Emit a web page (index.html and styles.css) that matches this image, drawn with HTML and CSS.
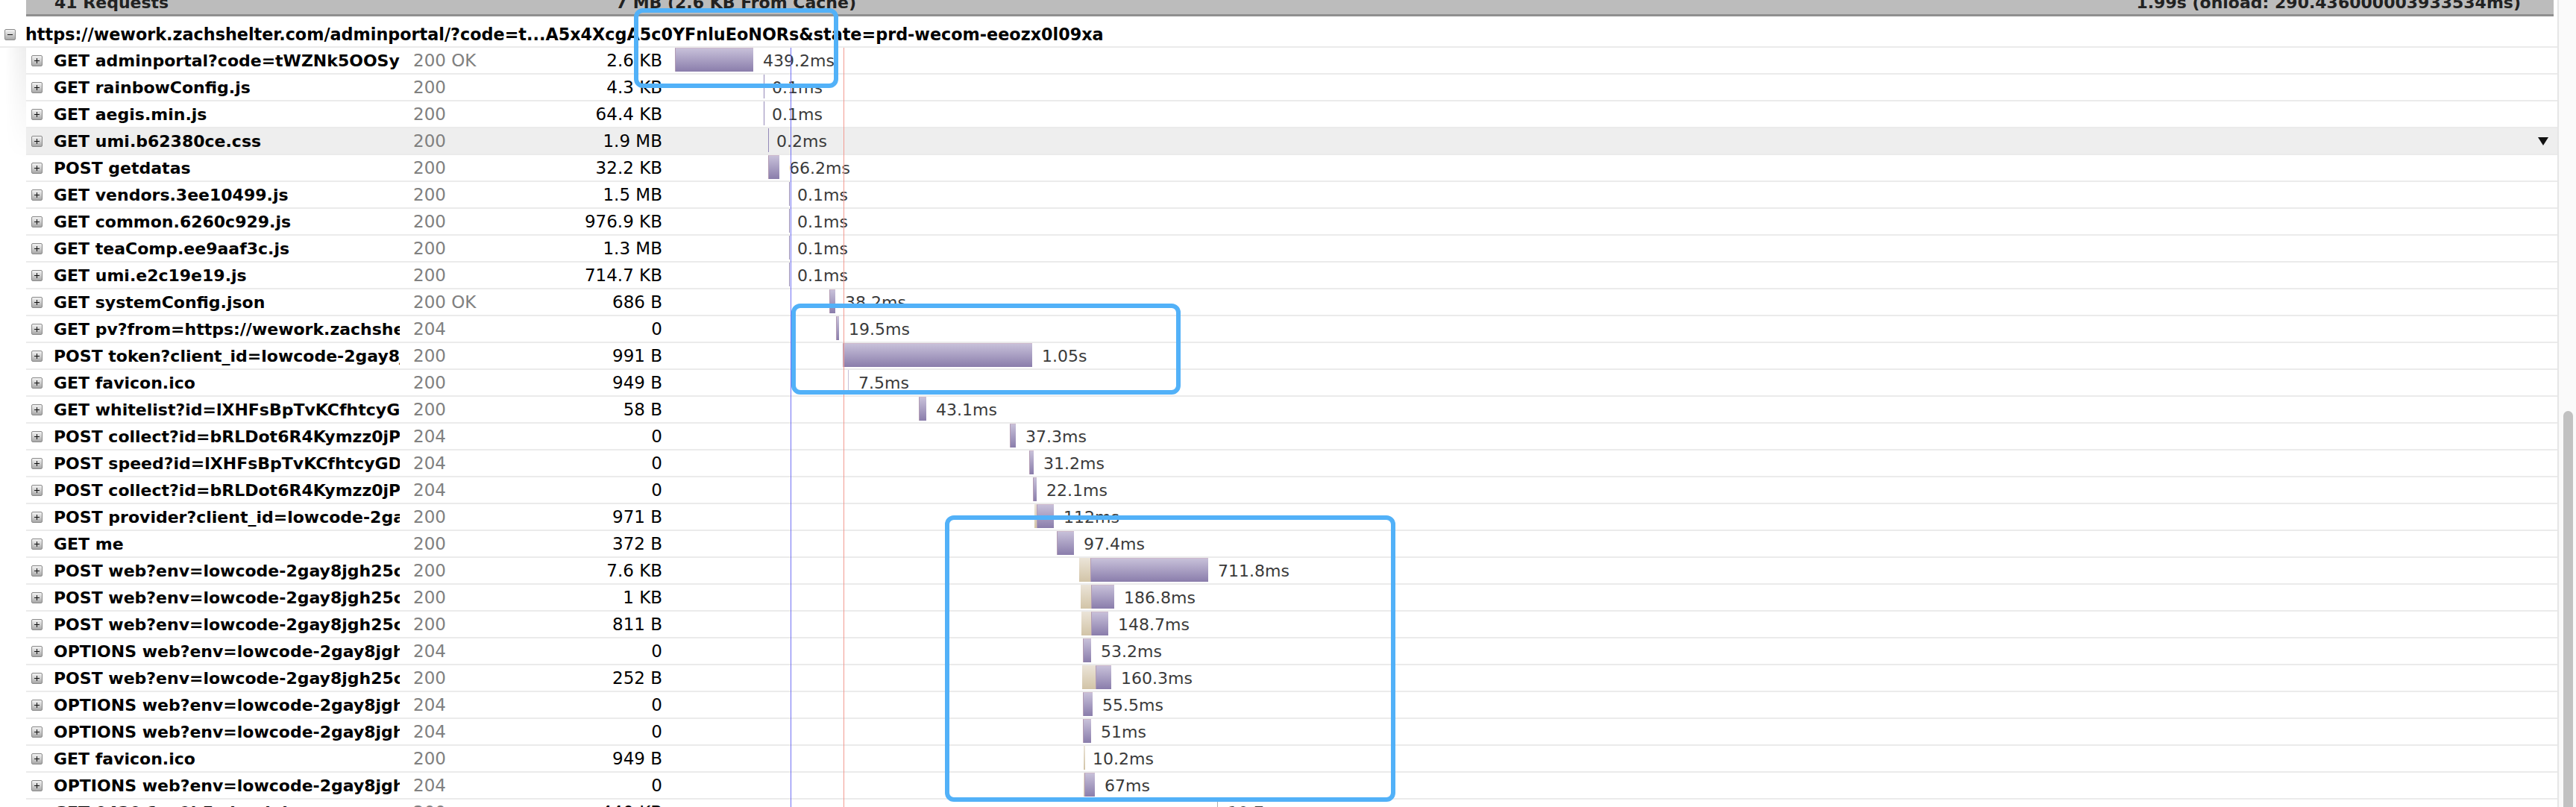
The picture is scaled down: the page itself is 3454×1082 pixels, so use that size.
FILE: index.html
```html
<!DOCTYPE html>
<html>
<head>
<meta charset="utf-8">
<title>Net</title>
<link rel="stylesheet" href="styles.css">
</head>
<body>
<div class="page">
  <div class="content">
    <div class="summary">
      <span class="sum-count">41 Requests</span>
      <span class="sum-size">7 MB (2.6 KB From Cache)</span>
      <span class="sum-time">1.99s (onload: 290.436000003933534ms)</span>
    </div>
    <div class="title">
      <span class="tw minus"></span>
      <span class="title-text">https://wework.zachshelter.com/adminportal/?code=t...A5x4XcgA5c0YFnluEoNORs&amp;state=prd-wecom-eeozx0l09xa</span>
    </div>
    <div class="rows">
      <div class="row"><span class="icon-cell"><span class="tw"></span></span><span class="name">GET adminportal?code=tWZNk5OOSylA5x4XcgA5c0YFnluEoNORs</span><span class="status">200 OK</span><span class="size">2.6 KB</span><span class="timeline"><span class="bar" style="margin-left:0px"><span class="recv" style="width:105px"></span></span><span class="label">439.2ms</span></span></div>
      <div class="row"><span class="icon-cell"><span class="tw"></span></span><span class="name">GET rainbowConfig.js</span><span class="status">200</span><span class="size">4.3 KB</span><span class="timeline"><span class="bar" style="margin-left:119px"><span class="thin" style="width:1px"></span></span><span class="label near">0.1ms</span></span></div>
      <div class="row"><span class="icon-cell"><span class="tw"></span></span><span class="name">GET aegis.min.js</span><span class="status">200</span><span class="size">64.4 KB</span><span class="timeline"><span class="bar" style="margin-left:119px"><span class="thin" style="width:1px"></span></span><span class="label near">0.1ms</span></span></div>
      <div class="row hover"><span class="icon-cell"><span class="tw"></span></span><span class="name">GET umi.b62380ce.css</span><span class="status">200</span><span class="size">1.9 MB</span><span class="timeline"><span class="bar" style="margin-left:125px"><span class="thin" style="width:1px"></span></span><span class="label near">0.2ms</span><span class="arrow"></span></span></div>
      <div class="row"><span class="icon-cell"><span class="tw"></span></span><span class="name">POST getdatas</span><span class="status">200</span><span class="size">32.2 KB</span><span class="timeline"><span class="bar" style="margin-left:125px"><span class="recv" style="width:15px"></span></span><span class="label">66.2ms</span></span></div>
      <div class="row"><span class="icon-cell"><span class="tw"></span></span><span class="name">GET vendors.3ee10499.js</span><span class="status">200</span><span class="size">1.5 MB</span><span class="timeline"><span class="bar" style="margin-left:153px"><span class="thin" style="width:1px"></span></span><span class="label near">0.1ms</span></span></div>
      <div class="row"><span class="icon-cell"><span class="tw"></span></span><span class="name">GET common.6260c929.js</span><span class="status">200</span><span class="size">976.9 KB</span><span class="timeline"><span class="bar" style="margin-left:153px"><span class="thin" style="width:1px"></span></span><span class="label near">0.1ms</span></span></div>
      <div class="row"><span class="icon-cell"><span class="tw"></span></span><span class="name">GET teaComp.ee9aaf3c.js</span><span class="status">200</span><span class="size">1.3 MB</span><span class="timeline"><span class="bar" style="margin-left:153px"><span class="thin" style="width:1px"></span></span><span class="label near">0.1ms</span></span></div>
      <div class="row"><span class="icon-cell"><span class="tw"></span></span><span class="name">GET umi.e2c19e19.js</span><span class="status">200</span><span class="size">714.7 KB</span><span class="timeline"><span class="bar" style="margin-left:153px"><span class="thin" style="width:1px"></span></span><span class="label near">0.1ms</span></span></div>
      <div class="row"><span class="icon-cell"><span class="tw"></span></span><span class="name">GET systemConfig.json</span><span class="status">200 OK</span><span class="size">686 B</span><span class="timeline"><span class="bar" style="margin-left:207px"><span class="recv" style="width:8px"></span></span><span class="label">38.2ms</span></span></div>
      <div class="row"><span class="icon-cell"><span class="tw"></span></span><span class="name">GET pv?from=https://wework.zachshelter.com</span><span class="status">204</span><span class="size">0</span><span class="timeline"><span class="bar" style="margin-left:216px"><span class="recv" style="width:4px"></span></span><span class="label">19.5ms</span></span></div>
      <div class="row"><span class="icon-cell"><span class="tw"></span></span><span class="name">POST token?client_id=lowcode-2gay8jgh25</span><span class="status">200</span><span class="size">991 B</span><span class="timeline"><span class="bar" style="margin-left:225px"><span class="recv" style="width:254px"></span></span><span class="label">1.05s</span></span></div>
      <div class="row"><span class="icon-cell"><span class="tw"></span></span><span class="name">GET favicon.ico</span><span class="status">200</span><span class="size">949 B</span><span class="timeline"><span class="bar" style="margin-left:232px"><span class="thin light" style="width:1px"></span></span><span class="label">7.5ms</span></span></div>
      <div class="row"><span class="icon-cell"><span class="tw"></span></span><span class="name">GET whitelist?id=lXHFsBpTvKCfhtcyGDx</span><span class="status">200</span><span class="size">58 B</span><span class="timeline"><span class="bar" style="margin-left:327px"><span class="recv" style="width:10px"></span></span><span class="label">43.1ms</span></span></div>
      <div class="row"><span class="icon-cell"><span class="tw"></span></span><span class="name">POST collect?id=bRLDot6R4Kymzz0jPx</span><span class="status">204</span><span class="size">0</span><span class="timeline"><span class="bar" style="margin-left:449px"><span class="recv" style="width:8px"></span></span><span class="label">37.3ms</span></span></div>
      <div class="row"><span class="icon-cell"><span class="tw"></span></span><span class="name">POST speed?id=lXHFsBpTvKCfhtcyGDx</span><span class="status">204</span><span class="size">0</span><span class="timeline"><span class="bar" style="margin-left:475px"><span class="recv" style="width:6px"></span></span><span class="label">31.2ms</span></span></div>
      <div class="row"><span class="icon-cell"><span class="tw"></span></span><span class="name">POST collect?id=bRLDot6R4Kymzz0jPx</span><span class="status">204</span><span class="size">0</span><span class="timeline"><span class="bar" style="margin-left:480px"><span class="recv" style="width:5px"></span></span><span class="label">22.1ms</span></span></div>
      <div class="row"><span class="icon-cell"><span class="tw"></span></span><span class="name">POST provider?client_id=lowcode-2gay8jgh25</span><span class="status">200</span><span class="size">971 B</span><span class="timeline"><span class="bar" style="margin-left:482px"><span class="wait" style="width:3px"></span><span class="recv" style="width:23px"></span></span><span class="label">112ms</span></span></div>
      <div class="row"><span class="icon-cell"><span class="tw"></span></span><span class="name">GET me</span><span class="status">200</span><span class="size">372 B</span><span class="timeline"><span class="bar" style="margin-left:512px"><span class="recv" style="width:23px"></span></span><span class="label">97.4ms</span></span></div>
      <div class="row"><span class="icon-cell"><span class="tw"></span></span><span class="name">POST web?env=lowcode-2gay8jgh25c</span><span class="status">200</span><span class="size">7.6 KB</span><span class="timeline"><span class="bar" style="margin-left:542px"><span class="wait" style="width:15px"></span><span class="recv" style="width:158px"></span></span><span class="label">711.8ms</span></span></div>
      <div class="row"><span class="icon-cell"><span class="tw"></span></span><span class="name">POST web?env=lowcode-2gay8jgh25c</span><span class="status">200</span><span class="size">1 KB</span><span class="timeline"><span class="bar" style="margin-left:544px"><span class="wait" style="width:14px"></span><span class="recv" style="width:31px"></span></span><span class="label">186.8ms</span></span></div>
      <div class="row"><span class="icon-cell"><span class="tw"></span></span><span class="name">POST web?env=lowcode-2gay8jgh25c</span><span class="status">200</span><span class="size">811 B</span><span class="timeline"><span class="bar" style="margin-left:545px"><span class="wait" style="width:13px"></span><span class="recv" style="width:23px"></span></span><span class="label">148.7ms</span></span></div>
      <div class="row"><span class="icon-cell"><span class="tw"></span></span><span class="name">OPTIONS web?env=lowcode-2gay8jgh25c</span><span class="status">204</span><span class="size">0</span><span class="timeline"><span class="bar" style="margin-left:547px"><span class="recv" style="width:11px"></span></span><span class="label">53.2ms</span></span></div>
      <div class="row"><span class="icon-cell"><span class="tw"></span></span><span class="name">POST web?env=lowcode-2gay8jgh25c</span><span class="status">200</span><span class="size">252 B</span><span class="timeline"><span class="bar" style="margin-left:546px"><span class="wait" style="width:18px"></span><span class="recv" style="width:21px"></span></span><span class="label">160.3ms</span></span></div>
      <div class="row"><span class="icon-cell"><span class="tw"></span></span><span class="name">OPTIONS web?env=lowcode-2gay8jgh25c</span><span class="status">204</span><span class="size">0</span><span class="timeline"><span class="bar" style="margin-left:547px"><span class="recv" style="width:13px"></span></span><span class="label">55.5ms</span></span></div>
      <div class="row"><span class="icon-cell"><span class="tw"></span></span><span class="name">OPTIONS web?env=lowcode-2gay8jgh25c</span><span class="status">204</span><span class="size">0</span><span class="timeline"><span class="bar" style="margin-left:547px"><span class="recv" style="width:11px"></span></span><span class="label">51ms</span></span></div>
      <div class="row"><span class="icon-cell"><span class="tw"></span></span><span class="name">GET favicon.ico</span><span class="status">200</span><span class="size">949 B</span><span class="timeline"><span class="bar" style="margin-left:548px"><span class="wait" style="width:2px"></span></span><span class="label near">10.2ms</span></span></div>
      <div class="row"><span class="icon-cell"><span class="tw"></span></span><span class="name">OPTIONS web?env=lowcode-2gay8jgh25c</span><span class="status">204</span><span class="size">0</span><span class="timeline"><span class="bar" style="margin-left:548px"><span class="wait" style="width:1px"></span><span class="recv" style="width:14px"></span></span><span class="label">67ms</span></span></div>
      <div class="row"><span class="icon-cell"><span class="tw"></span></span><span class="name">GET 0430.1ac9b5.chunk.js</span><span class="status">200</span><span class="size">440 KB</span><span class="timeline"><span class="bar" style="margin-left:727px"><span class="thin grey" style="width:1px"></span></span><span class="label">10.7ms</span></span></div>
    </div>
    <div class="gutter-shade"></div>
    <div class="vline blue"></div>
    <div class="vline red"></div>
    <div class="mark m1"></div>
    <div class="mark m2"></div>
    <div class="mark m3"></div>
  </div>
  <div class="scrollbar"><div class="thumb"></div></div>
</div>
</body>
</html>
```

FILE: styles.css
```css
html, body {
  margin: 0;
  height: 100%;
  overflow: hidden;
  background: #fff;
}
body {
  font-family: "DejaVu Sans", "Liberation Sans", sans-serif;
  color: #000;
}
.page {
  display: flex;
  height: 1082px;
}
.content {
  position: relative;
  width: 3429px;
  flex: none;
  border-right: 2px solid #e6e6e6;
  overflow: hidden;
}
.scrollbar {
  flex: 1;
  background: #fafafa;
  padding-top: 551px;
  box-sizing: border-box;
  overflow: hidden;
}
.thumb {
  margin-left: 6px;
  width: 13px;
  height: 700px;
  background: #c1c1c1;
  border-radius: 7px;
}

/* summary bar */
.summary {
  display: flex;
  margin: -12px 5px 0 35px;
  height: 31px;
  line-height: 31px;
  background: #bcbcbc;
  border-bottom: 3px solid #8f8f8f;
  font-weight: bold;
  font-size: 22px;
  color: #222;
  white-space: nowrap;
}
.sum-count {
  width: 600px;
  padding-left: 38px;
  box-sizing: border-box;
}
.sum-size {
  width: 513px;
  text-align: right;
}
.sum-time {
  flex: 1;
  text-align: right;
  padding-right: 44px;
}

/* page title row */
.title {
  display: flex;
  align-items: center;
  height: 32px;
  padding-top: 8px;
  border-bottom: 2px solid #ebebeb;
  font-weight: bold;
  font-size: 22.3px;
  line-height: 32px;
  white-space: nowrap;
}
.title .tw {
  margin: 0 13px 0 6px;
}

/* twisty icon */
.tw {
  display: block;
  position: relative;
  width: 13px;
  height: 13px;
  border: 1px solid #8a8a8a;
  border-radius: 2px;
  background: linear-gradient(to bottom, #f4f4f4, #a8a8a8);
}
.tw::before, .tw::after {
  content: "";
  position: absolute;
  background: #111;
}
.tw::before {
  left: 3px;
  top: 6px;
  width: 7px;
  height: 1px;
}
.tw::after {
  left: 6px;
  top: 3px;
  width: 1px;
  height: 7px;
}
.tw.minus::after {
  display: none;
}

/* rows */
.row {
  display: flex;
  align-items: center;
  height: 34px;
  margin-left: 35px;
  border-bottom: 2px solid #ebebeb;
  white-space: nowrap;
}
.row.hover {
  background: #eeeeee;
}
.icon-cell {
  width: 37px;
  flex: none;
}
.icon-cell .tw {
  margin-left: 7px;
}
.name {
  width: 464px;
  flex: none;
  overflow: hidden;
  font-weight: bold;
  font-size: 22px;
}
.status {
  width: 200px;
  flex: none;
  padding-left: 18px;
  box-sizing: border-box;
  color: #808080;
  font-size: 23px;
}
.size {
  width: 152px;
  flex: none;
  text-align: right;
  font-size: 23px;
}
.timeline {
  flex: 1;
  align-self: stretch;
  display: flex;
  align-items: center;
  padding-left: 17px;
}
.bar {
  align-self: flex-start;
  display: flex;
  height: 32px;
}
.recv {
  box-sizing: border-box;
  background: linear-gradient(to bottom, #c7c0d9, #8a7dab);
  border-top: 1px solid #cdb8cc;
  border-left: 1px solid #b39cb4;
}
.wait {
  background: linear-gradient(to bottom, #ebe4d8, #d2c4a7);
}
.thin {
  background: #9489b8;
}
.thin.light {
  background: #c7bfd6;
}
.thin.grey {
  background: #b0b0b0;
}
.label {
  margin-left: 13px;
  font-size: 22px;
  color: #3a3a3a;
}
.label.near {
  margin-left: 10px;
}
.arrow {
  margin-left: auto;
  margin-right: 12px;
  width: 0;
  height: 0;
  border-left: 7px solid transparent;
  border-right: 7px solid transparent;
  border-top: 11px solid #111;
}

/* overlays */
.gutter-shade {
  position: absolute;
  left: 0;
  top: 64px;
  width: 35px;
  height: 150px;
  background: linear-gradient(to right, rgba(0,0,0,0) 20%, rgba(0,0,0,0.07));
  -webkit-mask-image: linear-gradient(to bottom, #000, transparent);
  mask-image: linear-gradient(to bottom, #000, transparent);
}
.vline {
  position: absolute;
  top: 64px;
  bottom: 0;
  width: 1px;
}
.vline.blue {
  left: 1060px;
  background: #6f6ff2;
}
.vline.red {
  left: 1131px;
  background: #f29a92;
}
.mark {
  position: absolute;
  box-sizing: border-box;
  border: 6px solid #52b1f8;
  border-radius: 12px;
}
.m1 {
  left: 850px;
  top: 11px;
  width: 274px;
  height: 107px;
}
.m2 {
  left: 1061px;
  top: 407px;
  width: 522px;
  height: 122px;
}
.m3 {
  left: 1267px;
  top: 691px;
  width: 604px;
  height: 384px;
}
```
